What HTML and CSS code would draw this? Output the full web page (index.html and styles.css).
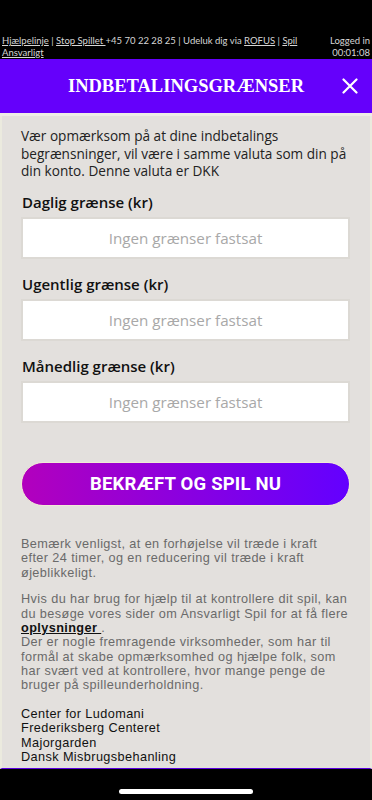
FILE: index.html
```html
<!DOCTYPE html>
<html lang="da">
<head>
<meta charset="utf-8">
<meta name="viewport" content="width=device-width, initial-scale=1">
<title>Indbetalingsgrænser</title>
<link rel="stylesheet" href="styles.css">
</head>
<body>
<div class="topbar">
  <div class="topbar-links"><a href="#">Hjælpelinje</a> | <a href="#">Stop Spillet </a>+45 70 22 28 25 | Udeluk dig via <a href="#">ROFUS</a> | <a href="#">Spil</a><br><a href="#">Ansvarligt</a></div>
  <div class="topbar-session">Logged in<br>00:01:08</div>
</div>
<header class="header">
  <span class="header-spacer"></span>
  <h1 class="header-title">INDBETALINGSGRÆNSER</h1>
  <button class="close-btn" aria-label="Luk">
    <svg viewBox="0 0 16 16" width="16" height="16"><path d="M1.5 1.5 L14.5 14.5 M14.5 1.5 L1.5 14.5" stroke="#fff" stroke-width="2.2" stroke-linecap="round" fill="none"/></svg>
  </button>
</header>
<main class="content">
  <p class="intro">Vær opmærksom på at dine indbetalings begrænsninger, vil være i samme valuta som din på din konto. Denne valuta er DKK</p>
  <form class="limits">
    <label class="field">
      <span class="field-label">Daglig grænse (kr)</span>
      <input class="field-input" type="text" placeholder="Ingen grænser fastsat">
    </label>
    <label class="field">
      <span class="field-label">Ugentlig grænse (kr)</span>
      <input class="field-input" type="text" placeholder="Ingen grænser fastsat">
    </label>
    <label class="field">
      <span class="field-label">Månedlig grænse (kr)</span>
      <input class="field-input" type="text" placeholder="Ingen grænser fastsat">
    </label>
    <button class="confirm-btn" type="button">BEKRÆFT OG SPIL NU</button>
  </form>
  <div class="notes">
    <p class="note">Bemærk venligst, at en forhøjelse vil træde i kraft<br>efter 24 timer, og en reducering vil træde i kraft<br>øjeblikkeligt.</p>
    <p class="note">Hvis du har brug for hjælp til at kontrollere dit spil, kan<br>du besøge vores sider om Ansvarligt Spil for at få flere<br><a class="note-link" href="#">oplysninger&nbsp;</a>.<br>Der er nogle fremragende virksomheder, som har til<br>formål at skabe opmærksomhed og hjælpe folk, som<br>har svært ved at kontrollere, hvor mange penge de<br>bruger på spilleunderholdning.</p>
    <ul class="orgs">
      <li>Center for Ludomani</li>
      <li>Frederiksberg Centeret</li>
      <li>Majorgarden</li>
      <li>Dansk Misbrugsbehanling</li>
    </ul>
  </div>
</main>
<div class="home-area"><span class="home-indicator"></span></div>
</body>
</html>
```
FILE: styles.css
```css
* { box-sizing: border-box; }
html, body { margin: 0; padding: 0; }
body {
  background: #000;
  width: 372px;
  font-family: "Open Sans", "Noto Sans", sans-serif;
}
.topbar {
  display: flex;
  justify-content: space-between;
  align-items: flex-start;
  padding: 35px 2px 0 2px;
  height: 59px;
  color: #d6d6d6;
  font-family: Lato, "Open Sans", sans-serif;
  font-size: 9.5px;
  line-height: 11.5px;
}
.topbar a { color: #d6d6d6; text-decoration: underline; }
.topbar-links { width: 305px; }
.topbar-session { text-align: right; }
.header {
  display: grid;
  grid-template-columns: 40px 1fr 40px;
  align-items: center;
  height: 57px;
  background: #6500fb;
  border-bottom: 3px solid #efede6;
}
.header-title {
  margin: 0;
  text-align: center;
  color: #fff;
  font-family: "Liberation Serif", serif;
  font-weight: bold;
  font-size: 18.5px;
}
.close-btn {
  justify-self: end;
  margin-right: 14px;
  background: none;
  border: 0;
  padding: 0;
  width: 16px;
  height: 16px;
  display: flex;
}
.content {
  background: #e3e0dd;
  border-left: 2px solid #ebeade;
  border-right: 2px solid #ebeade;
  border-bottom: 1px solid #5a00e0;
  padding: 11px 20px 4px 19px;
}
.intro {
  margin: 0;
  color: #222;
  font-size: 13.6px;
  line-height: 17.5px;
}
.limits {
  display: flex;
  flex-direction: column;
  margin-top: 13px;
}
.field {
  display: flex;
  flex-direction: column;
  gap: 6px;
  margin-bottom: 16px;
}
.field-label {
  color: #111;
  font-size: 15px;
  font-weight: 600;
  line-height: 18px;
  padding-left: 1px;
}
.field-input {
  height: 42px;
  width: 100%;
  border: 2px solid #dcd9d4;
  background: #fff;
  text-align: center;
  font-family: inherit;
  font-size: 15.2px;
  color: #333;
  outline: none;
}
.field-input::placeholder { color: #a8a8a8; }
.confirm-btn {
  margin-top: 23.5px;
  height: 44px;
  width: 100%;
  border: 1px solid #f1ead6;
  border-radius: 22px;
  background: linear-gradient(90deg, #b200bd 0%, #8a00e0 50%, #6300ff 100%);
  color: #fff;
  font-family: Roboto, "Liberation Sans", sans-serif;
  font-weight: 700;
  font-size: 18.5px;
  letter-spacing: 0.2px;
}
.notes {
  margin-top: 31px;
  color: #6a6a6a;
  font-family: "Liberation Sans", Arial, sans-serif;
  font-size: 12.7px;
  letter-spacing: 0.4px;
  line-height: 14.3px;
  white-space: nowrap;
}
.note { margin: 0 0 12.5px 0; }
.note + .note { margin-bottom: 0; }
.note-link {
  color: #111;
  font-weight: 700;
  text-decoration: underline;
}
.orgs {
  list-style: none;
  margin: 14.5px 0 0 0;
  padding: 0;
  color: #111;
}
.home-area {
  height: 30px;
  display: flex;
  justify-content: center;
  align-items: flex-end;
  padding-bottom: 5px;
}
.home-indicator {
  width: 134px;
  height: 5px;
  border-radius: 3px;
  background: #fff;
}
```
